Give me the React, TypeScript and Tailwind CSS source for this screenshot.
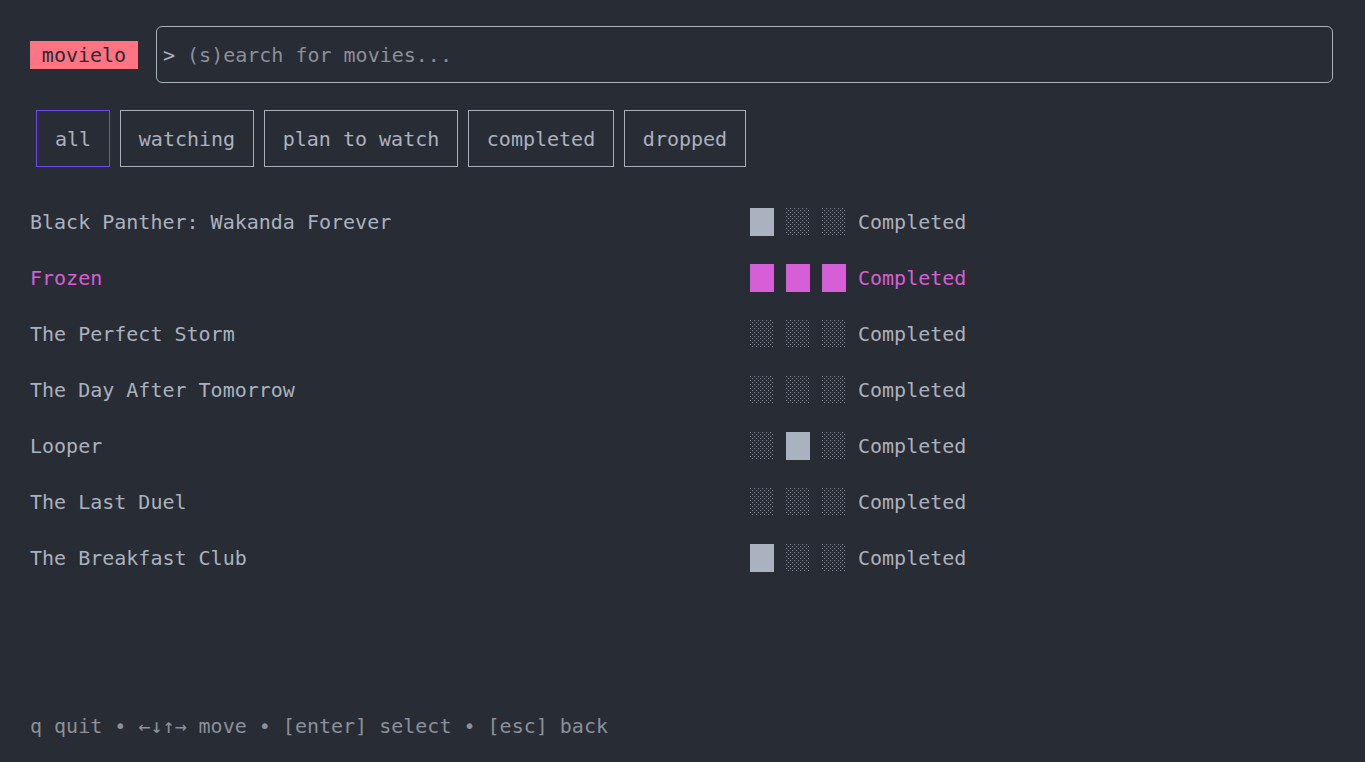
import React from "react";

type Movie = { title: string; rating: number[]; status: string };

// 1 = filled cell, 0 = light shade cell
const movies: Movie[] = [
  { title: "Black Panther: Wakanda Forever", rating: [1, 0, 0], status: "Completed" },
  { title: "Frozen", rating: [1, 1, 1], status: "Completed" },
  { title: "The Perfect Storm", rating: [0, 0, 0], status: "Completed" },
  { title: "The Day After Tomorrow", rating: [0, 0, 0], status: "Completed" },
  { title: "Looper", rating: [0, 1, 0], status: "Completed" },
  { title: "The Last Duel", rating: [0, 0, 0], status: "Completed" },
  { title: "The Breakfast Club", rating: [1, 0, 0], status: "Completed" },
];

const tabs = [
  { label: "all", width: "w-[74px]" },
  { label: "watching", width: "w-[134px]" },
  { label: "plan to watch", width: "w-[194px]" },
  { label: "completed", width: "w-[146px]" },
  { label: "dropped", width: "w-[122px]" },
];

function Shade({ id }: { id: string }) {
  return (
    <svg width="24" height="28" viewBox="0 0 24 28" className="block">
      <defs>
        <pattern id={id} width="4" height="4" patternUnits="userSpaceOnUse">
          <rect x="0" y="0" width="1" height="1" fill="#8c929c" />
          <rect x="2" y="2" width="1" height="1" fill="#8c929c" />
        </pattern>
      </defs>
      <rect x="0" y="0" width="24" height="28" fill={`url(#${id})`} />
    </svg>
  );
}

function Rating({ cells, active, row }: { cells: number[]; active: boolean; row: number }) {
  return (
    <div className="flex gap-[12px]">
      {cells.map((c, i) =>
        c ? (
          <div
            key={i}
            className={active ? "h-[28px] w-[24px] bg-[#d65fd8]" : "h-[28px] w-[24px] bg-[#abb2bf]"}
          />
        ) : (
          <Shade key={i} id={`shade-${row}-${i}`} />
        )
      )}
    </div>
  );
}

export default function App() {
  return (
    <div
      className="h-[762px] w-[1365px] overflow-hidden bg-[#282c34] text-[20px] leading-[28px] text-[#abb2bf]"
      style={{ fontFamily: '"DejaVu Sans Mono", "Liberation Mono", monospace' }}
    >
      <div className="flex items-center pl-[30px] pr-[32px] pt-[26px]">
        <div className="h-[28px] w-[108px] bg-[#ff7382] text-center text-[#282c34]">movielo</div>
        <div className="ml-[18px] flex h-[57px] flex-1 items-center rounded-[6px] border border-[#abb2bf] pl-[6px]">
          <span className="text-[#abb2bf]">&gt;</span>
          <span className="ml-[12px] text-[#8b9099]">(s)earch for movies...</span>
        </div>
      </div>

      <div className="mt-[27px] flex gap-[10px] pl-[36px]">
        {tabs.map((t, i) => (
          <div
            key={t.label}
            className={
              i === 0
                ? `flex h-[57px] items-center justify-center border border-[#6e4bef] ${t.width}`
                : `flex h-[57px] items-center justify-center border border-[#a9afba] ${t.width}`
            }
          >
            {t.label}
          </div>
        ))}
      </div>

      <div className="mt-[27px] flex flex-col pl-[30px]">
        {movies.map((m, i) => {
          const active = i === 1;
          return (
            <div key={m.title} className="flex h-[56px] items-center">
              <div className={active ? "w-[720px] text-[#d65fd8]" : "w-[720px]"}>{m.title}</div>
              <Rating cells={m.rating} active={active} row={i} />
              <div className={active ? "ml-[12px] text-[#d65fd8]" : "ml-[12px]"}>{m.status}</div>
            </div>
          );
        })}
      </div>

      <div className="mt-[126px] pl-[30px] text-[#8b9099]">
        q quit • ←↓↑→ move • [enter] select • [esc] back
      </div>
    </div>
  );
}
